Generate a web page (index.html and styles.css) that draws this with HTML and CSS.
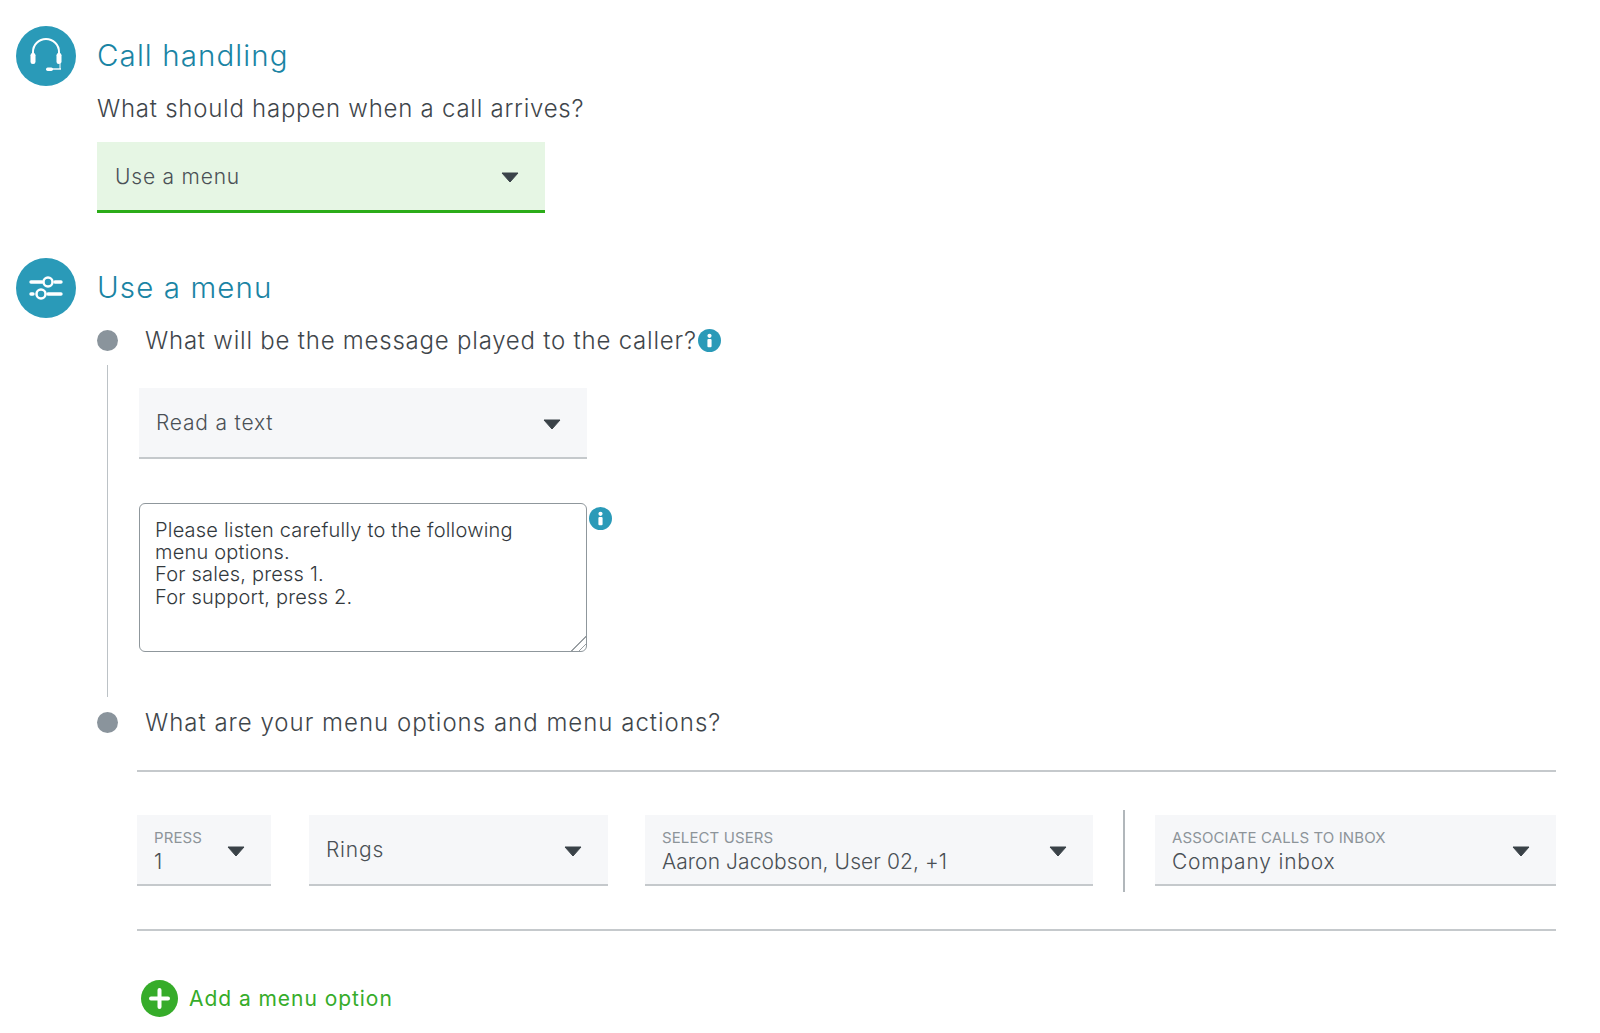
FILE: index.html
```html
<!DOCTYPE html>
<html lang="en">
<head>
<meta charset="utf-8">
<title>Call handling</title>
<link rel="stylesheet" href="styles.css">
</head>
<body>
<main class="page">
  <header class="head">
    <svg class="badge" viewBox="0 0 60 60"><circle cx="30" cy="30" r="30" fill="#2a9ab8"/><path d="M17 29v-3a13 13 0 0 1 26 0v3" fill="none" stroke="#fff" stroke-width="2"/><rect x="14.500" y="27" width="5" height="11" rx="2.300" fill="#fff"/><rect x="40.500" y="27" width="5" height="11" rx="2.300" fill="#fff"/><path d="M44 38v5" stroke="#fff" stroke-width="1"/><rect x="30" y="41.500" width="7" height="3.400" rx="1.700" fill="#fff"/><path d="M36 43h9" stroke="#fff" stroke-width="1.400"/></svg>
    <h1 class="title">Call handling</h1>
  </header>
  <div class="indent">
    <p class="subtitle">What should happen when a call arrives?</p>
    <div class="select select-green">
      <span class="value">Use a menu</span>
      <svg class="arrow" viewBox="0 0 18 11"><path d="M1 1h16l-8 9z" fill="#3a4248" stroke="#3a4248" stroke-linejoin="round"/></svg>
    </div>
  </div>
  <header class="head head-second">
    <svg class="badge" viewBox="0 0 60 60"><circle cx="30" cy="30" r="30" fill="#2a9ab8"/><g fill="none" stroke="#fff" stroke-width="3.400" stroke-linecap="round"><path d="M15 24h11M39 24h6M15 36h2M32 36h13"/></g><g fill="none" stroke="#fff" stroke-width="2.500"><circle cx="32" cy="24" r="4.500"/><circle cx="25" cy="36" r="4.500"/></g></svg>
    <h2 class="title">Use a menu</h2>
  </header>
  <div class="indent">
    <div class="step">
      <span class="dot"></span>
      <span class="question">What will be the message played to the caller?</span>
      <svg class="info" viewBox="0 0 22 22"><circle cx="11" cy="11" r="11" fill="#2a9ab8"/><circle cx="11" cy="6.500" r="2" fill="#fff"/><rect x="9" y="9.500" width="4" height="8" rx="1" fill="#fff"/></svg>
    </div>
    <div class="step-body">
      <div class="select select-grey select-text">
        <span class="value">Read a text</span>
        <svg class="arrow" viewBox="0 0 18 11"><path d="M1 1h16l-8 9z" fill="#3a4248" stroke="#3a4248" stroke-linejoin="round"/></svg>
      </div>
      <div class="message">
        <textarea class="textarea" aria-label="Message">Please listen carefully to the following
menu options.
For sales, press 1.
For support, press 2.</textarea>
        <svg class="info" viewBox="0 0 22 22"><circle cx="11" cy="11" r="11" fill="#2a9ab8"/><circle cx="11" cy="6.500" r="2" fill="#fff"/><rect x="9" y="9.500" width="4" height="8" rx="1" fill="#fff"/></svg>
      </div>
    </div>
    <div class="step step-second">
      <span class="dot"></span>
      <span class="question question-wide">What are your menu options and menu actions?</span>
    </div>
    <div class="options">
      <div class="option-row">
        <div class="select select-grey select-press">
          <span class="stack"><span class="label">PRESS</span><span class="value">1</span></span>
          <svg class="arrow" viewBox="0 0 18 11"><path d="M1 1h16l-8 9z" fill="#3a4248" stroke="#3a4248" stroke-linejoin="round"/></svg>
        </div>
        <div class="select select-grey select-rings">
          <span class="value">Rings</span>
          <svg class="arrow" viewBox="0 0 18 11"><path d="M1 1h16l-8 9z" fill="#3a4248" stroke="#3a4248" stroke-linejoin="round"/></svg>
        </div>
        <div class="select select-grey select-users">
          <span class="stack"><span class="label">SELECT USERS</span><span class="value value-tight">Aaron Jacobson, User 02, +1</span></span>
          <svg class="arrow" viewBox="0 0 18 11"><path d="M1 1h16l-8 9z" fill="#3a4248" stroke="#3a4248" stroke-linejoin="round"/></svg>
        </div>
        <span class="separator"></span>
        <div class="select select-grey select-inbox">
          <span class="stack"><span class="label">ASSOCIATE CALLS TO INBOX</span><span class="value">Company inbox</span></span>
          <svg class="arrow" viewBox="0 0 18 11"><path d="M1 1h16l-8 9z" fill="#3a4248" stroke="#3a4248" stroke-linejoin="round"/></svg>
        </div>
      </div>
      <div class="add">
        <svg class="add-icon" viewBox="0 0 37 37"><circle cx="18.500" cy="18.500" r="18.500" fill="#36ac2a"/><path d="M18.500 10v17M10 18.500h17" stroke="#fff" stroke-width="4" stroke-linecap="round"/></svg>
        <span class="add-text">Add a menu option</span>
      </div>
    </div>
  </div>
</main>
</body>
</html>
```
FILE: styles.css
```css
* { box-sizing: border-box; }
html, body { margin: 0; background: #fff; }
body { font-family: Inter, "Open Sans", "Liberation Sans", sans-serif; color: #444b50; }
.page { padding: 26px 44px 0 16px; }
.head { display: flex; align-items: center; gap: 21px; height: 60px; }
.head-second { margin-top: 45px; }
.badge { width: 60px; height: 60px; flex: none; }
.title { margin: 0; padding-bottom: 2px; font-size: 29.500px; font-weight: 300; letter-spacing: 1.100px; color: #1a84a4; }
.indent { margin-left: 81px; }
.subtitle { margin: 8px 0 0; height: 29px; line-height: 29px; font-size: 24px; font-weight: 300; letter-spacing: 0.750px; color: #3f464b; }
.select { display: flex; align-items: center; justify-content: space-between; height: 71px; padding: 0 26px 0 18px; border-bottom: 2px solid #c5c9cc; }
.select-green { width: 448px; margin-top: 19px; background: #e6f6e4; border-bottom: 3px solid #2bac18; }
.select-grey { background: #f6f7f9; padding-left: 17px; }
.select-text { width: 448px; }
.value { font-size: 21px; font-weight: 300; letter-spacing: 0.800px; color: #4a5055; }
.value-tight { letter-spacing: 0.080px; }
.arrow { width: 18px; height: 11px; flex: none; margin-top: 3px; }
.stack { display: flex; flex-direction: column; }
.label { font-size: 15px; line-height: 19px; margin-top: 4px; font-weight: 400; color: #8d9499; letter-spacing: 0.100px; }
.stack .value { line-height: 26px; margin-top: 2px; }
.step { display: flex; align-items: center; height: 30px; margin-top: 7px; }
.step-second { margin-top: 10px; }
.dot { width: 21px; height: 21px; border-radius: 50%; background: #8a949c; flex: none; margin-right: 27px; }
.question { font-size: 24px; font-weight: 300; letter-spacing: 0.780px; color: #3f464b; }
.question-wide { letter-spacing: 1px; }
.step .info { margin-left: 1px; }
.info { width: 23px; height: 23px; flex: none; }
.step-body { margin: 10px 0 0 10px; padding: 23px 0 45px 31px; border-left: 1.500px solid #bcc2c6; }
.message { display: flex; align-items: flex-start; gap: 2px; margin-top: 44px; }
.message .info { margin-top: 4px; }
.textarea { display: block; width: 448px; height: 149px; padding: 15px 15px; margin: 0; border: 1.500px solid #8f979c; border-radius: 6px; font: 300 20px/22.200px Inter, "Open Sans", sans-serif; letter-spacing: 0.200px; color: #33393d; background: #fff; outline: none; overflow: hidden; }
.textarea::-webkit-resizer { background: linear-gradient(135deg, transparent 50%, #9aa0a4 50%, #9aa0a4 56%, transparent 56%, transparent 74%, #9aa0a4 74%, #9aa0a4 80%, transparent 80%); }
.options { margin: 33px 0 0 40px; }
.option-row { display: flex; align-items: center; height: 161px; border-top: 2px solid #c5c9cc; border-bottom: 2px solid #c5c9cc; }
.option-row .select { height: 71px; }
.select-press { width: 134px; margin-right: 38px; }
.select-rings { width: 299px; margin-right: 37px; }
.select-users { width: 448px; }
.separator { width: 2px; height: 82px; margin: 0 30px 0 30px; background: #b1b7bb; flex: none; }
.select-inbox { flex: 1; }
.add { display: flex; align-items: center; gap: 11px; margin: 49px 0 0 4px; }
.add-icon { width: 37px; height: 37px; flex: none; }
.add-text { font-size: 21px; font-weight: 400; letter-spacing: 0.950px; color: #36ac2a; }
```
